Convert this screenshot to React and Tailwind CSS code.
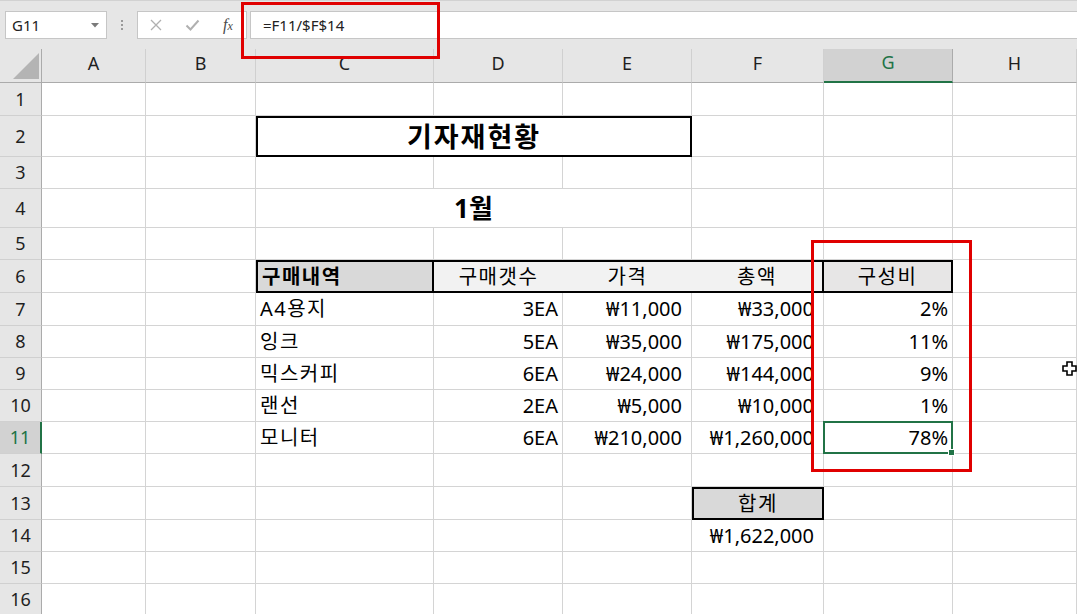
import React from 'react';

const COLS = ['A', 'B', 'C', 'D', 'E', 'F', 'G', 'H'];
const ROWS = Array.from({ length: 16 }, (_, i) => i + 1);

const GRID = 'border-r border-b border-[#d4d4d4]';

const item = (name, qty, price, total, pct, selected) => ({
  C: { text: name, ko: true, cls: 'pl-[4px]' },
  D: { text: qty, cls: 'justify-end pr-[4px]' },
  E: { text: price, cls: 'justify-end pr-[9px]' },
  F: { text: total, cls: 'justify-end pr-[9px]' },
  G: { text: pct, cls: 'justify-end pr-[4px]', selected },
});

const DATA = {
  2: {
    C: {
      span: 3,
      text: '기자재현황',
      box: true,
      cls: 'col-span-3 justify-center text-[27px] tracking-[2px] font-bold border-2 border-black',
    },
  },
  4: {
    C: {
      span: 3,
      text: '1월',
      cls: 'col-span-3 justify-center text-[26px] font-bold',
    },
  },
  6: {
    C: { text: '구매내역', ko: true, box: true, cls: 'pl-[4px] font-bold bg-[#d9d9d9] border-2 border-black' },
    D: { text: '구매갯수', ko: true, box: true, cls: 'justify-center bg-[#f2f2f2] border-y-2 border-black' },
    E: { text: '가격', ko: true, box: true, cls: 'justify-center bg-[#f2f2f2] border-y-2 border-black' },
    F: { text: '총액', ko: true, box: true, cls: 'justify-center bg-[#f2f2f2] border-y-2 border-r-2 border-black' },
    G: { text: '구성비', ko: true, box: true, cls: 'justify-center bg-[#e7e6e6] border-y-2 border-r-2 border-black' },
  },
  7: item('A4용지', '3EA', '₩11,000', '₩33,000', '2%'),
  8: item('잉크', '5EA', '₩35,000', '₩175,000', '11%'),
  9: item('믹스커피', '6EA', '₩24,000', '₩144,000', '9%'),
  10: item('랜선', '2EA', '₩5,000', '₩10,000', '1%'),
  11: item('모니터', '6EA', '₩210,000', '₩1,260,000', '78%', true),
  13: {
    F: { text: '합계', ko: true, box: true, cls: 'justify-center bg-[#d9d9d9] border-2 border-black' },
  },
  14: {
    F: { text: '₩1,622,000', cls: 'justify-end pr-[9px]' },
  },
};

function TopBar() {
  return (
    <div className="h-[49px] bg-[#e6e6e6] border-t border-[#d2d2d2] pt-[10px] flex items-start">
      <div className="ml-[5px] w-[102px] h-[28px] bg-white border border-[#c6c6c6] flex items-center justify-between pl-[6px] pr-[7px] text-[15px] text-[#222]">
        <span>G11</span>
        <svg width="8" height="5" viewBox="0 0 8 5">
          <path d="M0 0H8L4 4.5Z" fill="#7a7a7a" />
        </svg>
      </div>
      <div className="w-[30px] h-[28px] flex flex-col items-center justify-center gap-[2px]">
        <span className="w-[2px] h-[2px] bg-[#9a9a9a]" />
        <span className="w-[2px] h-[2px] bg-[#9a9a9a]" />
        <span className="w-[2px] h-[2px] bg-[#9a9a9a]" />
      </div>
      <div className="w-[110px] h-[28px] bg-white border border-[#c6c6c6] flex items-center">
        <span className="w-[36px] flex justify-center">
          <svg width="12" height="12" viewBox="0 0 12 12">
            <path d="M1 1L11 11M11 1L1 11" stroke="#b0b0b0" strokeWidth="1.3" />
          </svg>
        </span>
        <span className="w-[36px] flex justify-center">
          <svg width="15" height="12" viewBox="0 0 15 12">
            <path d="M1.5 6.5L5.5 10.5L13.5 1.5" stroke="#b0b0b0" strokeWidth="2" fill="none" />
          </svg>
        </span>
        <span className="w-[36px] flex justify-center font-['Liberation_Serif',serif] italic text-[16px] leading-none text-[#4a4a4a]">
          f<span className="text-[12px] mt-[3px]">x</span>
        </span>
      </div>
      <div className="ml-[3px] flex-1 h-[28px] bg-white border border-r-0 border-[#c6c6c6] flex items-center pl-[12px] text-[15px] text-[#222]">
        =F11/$F$14
      </div>
    </div>
  );
}

function Sheet() {
  const cells = [];
  cells.push(
    <div
      key="corner"
      className="bg-[#e6e6e6] border-r border-b border-[#ababab] flex items-end justify-end pr-[2px] pb-[3px]"
    >
      <svg width="26" height="26" viewBox="0 0 26 26">
        <path d="M26 0V26H0Z" fill="#b4b4b4" />
      </svg>
    </div>
  );
  COLS.forEach((c) => {
    const sel = c === 'G';
    cells.push(
      <div
        key={'h' + c}
        className={
          sel
            ? 'flex items-center justify-center pb-[5px] bg-[#d2d2d2] text-[#217346] border-r border-r-[#ababab] border-b-2 border-b-[#217346] text-[18px]'
            : 'flex items-center justify-center pb-[5px] bg-[#e6e6e6] text-[#1f1f1f] border-r border-r-[#d0d0d0] border-b border-b-[#ababab] text-[18px]'
        }
      >
        {c}
      </div>
    );
  });

  ROWS.forEach((r) => {
    const sel = r === 11;
    cells.push(
      <div
        key={'r' + r}
        className={
          sel
            ? 'flex items-center justify-center bg-[#d2d2d2] text-[#217346] border-r-2 border-r-[#217346] border-b border-b-[#d0d0d0] text-[18px]'
            : 'flex items-center justify-center bg-[#e6e6e6] text-[#1f1f1f] border-r border-r-[#ababab] border-b border-b-[#d0d0d0] text-[18px]'
        }
      >
        {r}
      </div>
    );
    const row = DATA[r] || {};
    let skip = 0;
    COLS.forEach((c) => {
      if (skip > 0) {
        skip -= 1;
        return;
      }
      const cell = row[c];
      if (!cell) {
        cells.push(<div key={c + r} className={GRID} />);
        return;
      }
      if (cell.span) skip = cell.span - 1;
      cells.push(
        <div
          key={c + r}
          className={
            'relative flex items-center min-w-0 whitespace-nowrap text-[20px] leading-[24px] ' +
            (cell.box ? '' : GRID + ' ') +
            cell.cls
          }
        >
          <span className={cell.ko ? 'tracking-[1.5px]' : ''}>{cell.text}</span>
          {cell.selected && (
            <div className="absolute -top-[1px] -left-[1px] -right-[1px] -bottom-[1px] border-2 border-[#217346] z-10">
              <div className="absolute -right-[4px] -bottom-[4px] w-[7px] h-[7px] bg-[#217346] border border-white" />
            </div>
          )}
        </div>
      );
    });
  });

  return (
    <div className="grid grid-cols-[42px_104px_110px_178px_129px_129px_132px_129px_1fr] grid-rows-[34px_33px_41px_32px_39px_32px_33px_33px_32px_32px_32px_32px_33px_33px_32px_32px_32px]">
      {cells}
    </div>
  );
}

export default function App() {
  return (
    <div className="relative w-[1077px] h-[614px] overflow-hidden bg-white text-black font-['Noto_Sans','Noto_Sans_CJK_KR',sans-serif]">
      <TopBar />
      <Sheet />
      <div className="absolute left-[241px] top-[2px] w-[199px] h-[57px] border-[3px] border-[#e00000] z-20" />
      <div className="absolute left-[811px] top-[240px] w-[161px] h-[232px] border-[3px] border-[#e00000] z-20" />
      <svg
        className="absolute left-[1062px] top-[361px] z-20"
        width="15"
        height="15"
        viewBox="0 0 15 15"
      >
        <path
          d="M5 1H10V5H14V10H10V14H5V10H1V5H5Z"
          fill="white"
          stroke="black"
          strokeWidth="1.6"
        />
      </svg>
    </div>
  );
}
